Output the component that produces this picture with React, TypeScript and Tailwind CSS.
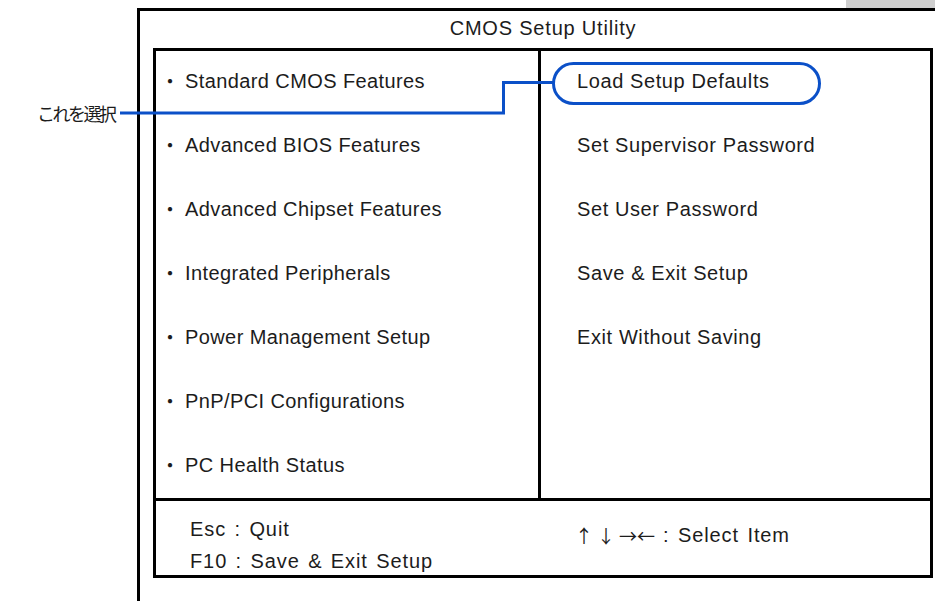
import React from "react";

const leftItems = [
  "Standard CMOS Features",
  "Advanced BIOS Features",
  "Advanced Chipset Features",
  "Integrated Peripherals",
  "Power Management Setup",
  "PnP/PCI Configurations",
  "PC Health Status",
];

const rightItems = [
  "Load Setup Defaults",
  "Set Supervisor Password",
  "Set User Password",
  "Save & Exit Setup",
  "Exit Without Saving",
];

export default function App() {
  return (
    <div className="relative w-[935px] h-[601px] overflow-hidden bg-white text-[#1c1c1c] font-['Liberation_Sans','Noto_Sans_CJK_JP',sans-serif] text-[20px] tracking-[0.4px]">
      {/* grey strip from the page above */}
      <div className="flex justify-end">
        <div className="h-[8px] w-[89px] bg-[#cfcfcf]" />
      </div>

      {/* outer frame */}
      <div className="ml-[137px] h-[593px] border-l-[3px] border-t-[3px] border-black">
        <div className="ml-[13px] w-[780px] h-[37px] pb-[3px] flex items-center justify-center tracking-[0.8px]">
          CMOS Setup Utility
        </div>

        {/* menu box */}
        <div className="ml-[13px] w-[780px] border-[3px] border-black">
          <div className="flex h-[450px] border-b-[3px] border-black">
            <div className="w-[385px] border-r-[3px] border-black pt-[14px] flex flex-col gap-[32px]">
              {leftItems.map((item) => (
                <div key={item} className="h-[32px] flex items-center pl-[4px]">
                  <span className="w-[20px] text-center font-['Noto_Sans_CJK_JP',sans-serif] tracking-normal">・</span>
                  <span className="ml-[5px]">{item}</span>
                </div>
              ))}
            </div>
            <div className="flex-1 pt-[14px] flex flex-col gap-[32px]">
              {rightItems.map((item, i) => (
                <div key={item} className="relative h-[32px] flex items-center pl-[36px] tracking-[0.6px]">
                  {i === 0 && (
                    <div className="absolute left-[11px] top-[-3px] w-[269px] h-[43px] rounded-full border-[3px] border-[#0b50c8]" />
                  )}
                  {item}
                </div>
              ))}
            </div>
          </div>

          {/* key help */}
          <div className="flex h-[74px] tracking-[0.9px] [word-spacing:2px]">
            <div className="w-[385px] pl-[34px] pt-[12px] leading-[32px]">
              <div>Esc : Quit</div>
              <div>F10 : Save &amp; Exit Setup</div>
            </div>
            <div className="flex-1 pl-[34px] pt-[18px] leading-[32px] flex items-center h-fit">
              <span className="font-['Noto_Sans_CJK_JP',sans-serif] text-[18px] tracking-normal [word-spacing:0px]">↑ ↓ →←</span>
              <span className="ml-[8px]">: Select Item</span>
            </div>
          </div>
        </div>
      </div>

      {/* callout */}
      <div className="absolute left-[37px] top-[100px] h-[26px] flex items-center text-[18px] tracking-[-2.5px] font-['Noto_Sans_CJK_JP',sans-serif]">
        これを選択
      </div>
      <svg className="absolute left-0 top-0 pointer-events-none" width="935" height="601">
        <polyline points="120,113 503.5,113 503.5,82.5 554,82.5" fill="none" stroke="#0b50c8" strokeWidth="3" />
      </svg>
    </div>
  );
}
